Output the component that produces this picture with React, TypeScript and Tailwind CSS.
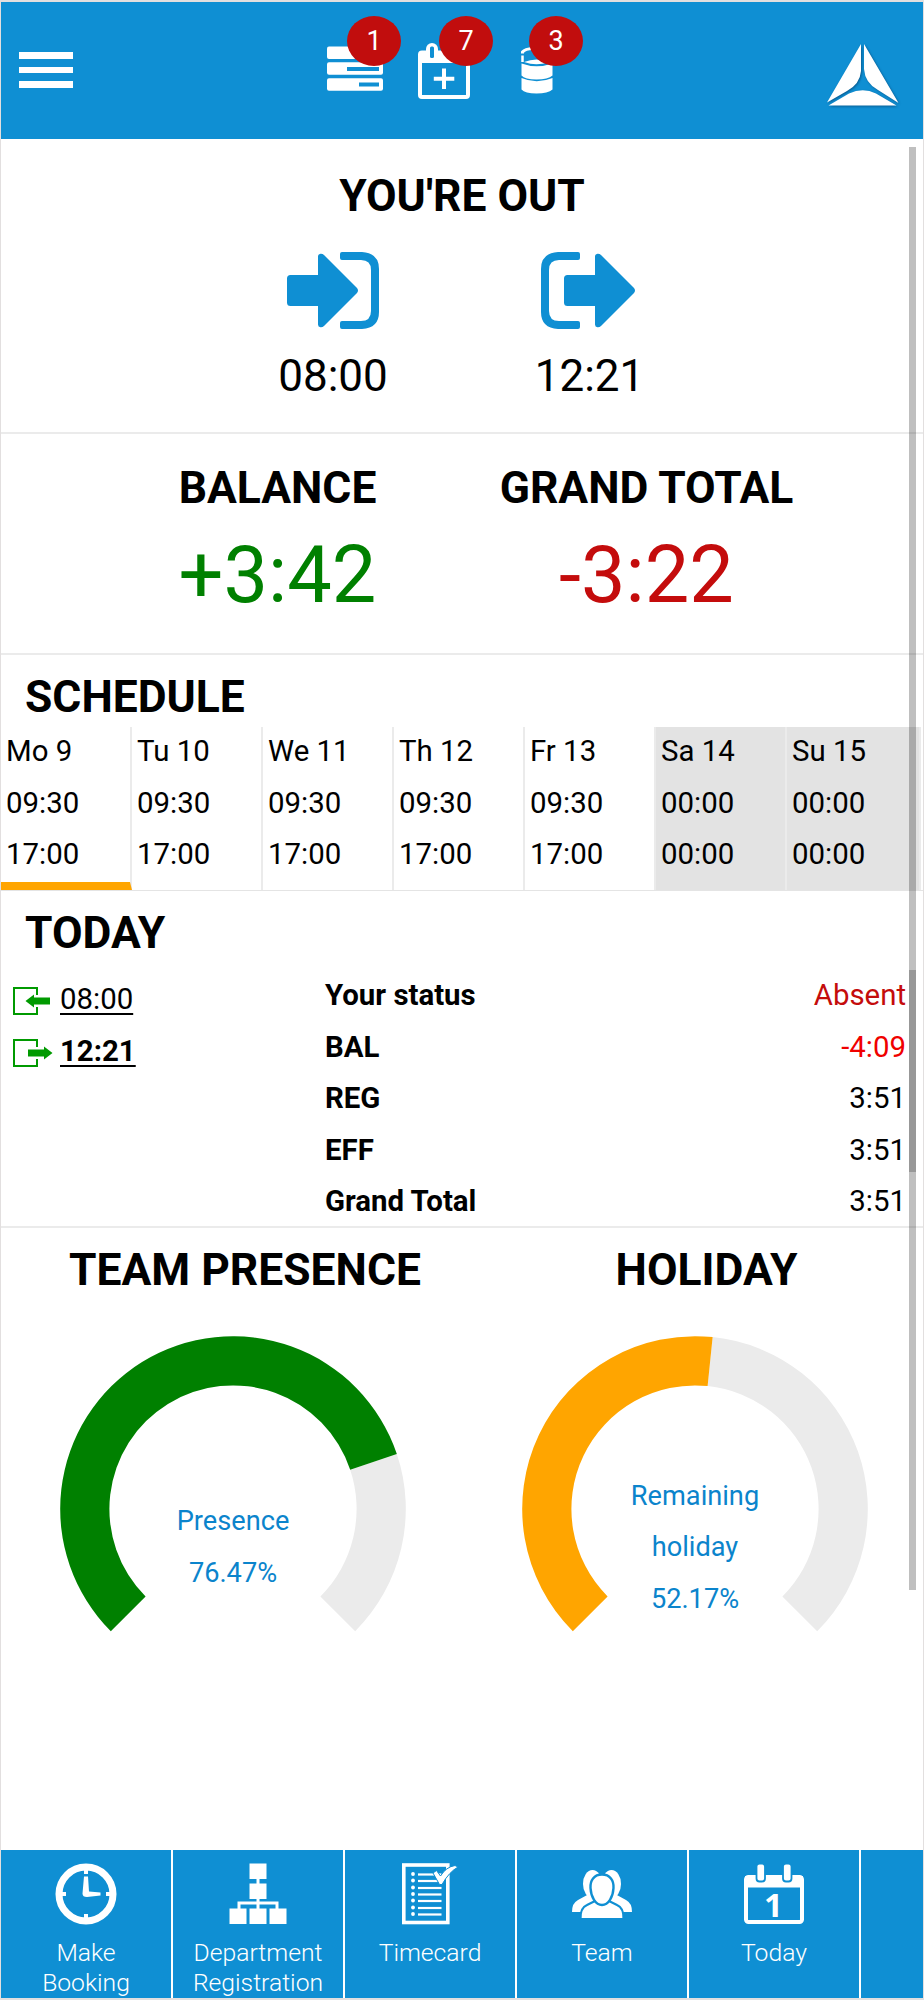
import type { ReactNode } from 'react';

interface Day {
  label: string;
  start: string;
  end: string;
  weekend?: boolean;
  current?: boolean;
}

const days: Day[] = [
  { label: 'Mo 9', start: '09:30', end: '17:00', current: true },
  { label: 'Tu 10', start: '09:30', end: '17:00' },
  { label: 'We 11', start: '09:30', end: '17:00' },
  { label: 'Th 12', start: '09:30', end: '17:00' },
  { label: 'Fr 13', start: '09:30', end: '17:00' },
  { label: 'Sa 14', start: '00:00', end: '00:00', weekend: true },
  { label: 'Su 15', start: '00:00', end: '00:00', weekend: true },
];

const totals = [
  { label: 'Your status', value: 'Absent', color: 'text-[#c40c0c]' },
  { label: 'BAL', value: '-4:09', color: 'text-[#f00000]' },
  { label: 'REG', value: '3:51', color: 'text-black' },
  { label: 'EFF', value: '3:51', color: 'text-black' },
  { label: 'Grand Total', value: '3:51', color: 'text-black' },
];

function ServerIcon() {
  return (
    <svg width="56" height="45" viewBox="0 0 56 45" fill="none">
      <rect x="0" y="0.5" width="56" height="12.5" rx="2" fill="#fff" />
      <rect x="0" y="16.3" width="56" height="12.5" rx="2" fill="#fff" />
      <rect x="0" y="32.2" width="56" height="12.5" rx="2" fill="#fff" />
      <rect x="20" y="21" width="32" height="4" fill="#0f8fd3" />
      <rect x="32" y="36.5" width="20" height="4" fill="#0f8fd3" />
    </svg>
  );
}

function CalendarPlusIcon() {
  return (
    <svg width="52" height="56" viewBox="0 0 52 56" fill="none">
      <rect x="2" y="9.5" width="48" height="44.5" rx="2" stroke="#fff" strokeWidth="4" />
      <rect x="2" y="9" width="48" height="11" fill="#fff" />
      <rect x="8" y="0" width="12" height="18" rx="6" fill="#fff" />
      <rect x="12" y="3.5" width="4" height="11.5" rx="1.5" fill="#0f8fd3" />
      <path d="M26 25.5v20.5M15.8 35.8h20.5" stroke="#fff" strokeWidth="4" />
    </svg>
  );
}

function DatabaseIcon() {
  return (
    <svg width="32" height="47" viewBox="0 0 32 47" fill="none">
      <path d="M1.500 15V8.500" stroke="#fff" strokeWidth="2.500" />
      <path d="M1.500 6.500V5Q4 1.800 12 1.500H20" stroke="#fff" strokeWidth="3" />
      <path d="M3 15Q15.500 10 28 15Q15.500 19.500 3 15Z" fill="#fff" />
      <path d="M0.500 16.500Q15.500 22 31.500 16.500V28.500Q27 32.500 15.500 32.500T0.500 28.500Z" fill="#fff" />
      <path d="M0.500 31Q15.500 37.500 31.500 31V42.500Q27 46.500 15.500 46.500T0.500 42.500Z" fill="#fff" />
    </svg>
  );
}

function Logo() {
  return (
    <svg className="drop-shadow-[1.500px_1.500px_1px_rgba(0,40,80,0.5)]" width="72" height="63" viewBox="0 0 72 63" fill="#fff">
      <path d="M34 0V27Q33 40 20 47L0 58.500Z" />
      <path d="M37 0V25Q38 39 51 46L71.500 59Z" />
      <path d="M1.500 61.500L22 49.500Q36 43 49 49.500L69.500 61.500Z" />
    </svg>
  );
}

function Arrow() {
  return <path d="M3.500 23H31V4.500Q31 2 33.500 1.700Q35.500 1.500 37 3L70 36Q72 38.500 70 41L37 74Q35.500 75.500 33.500 75.300Q31 75 31 72.500V54H3.500Q0 54 0 50.500V26.500Q0 23 3.500 23Z" />;
}

function SignInIcon() {
  return (
    <svg width="92" height="77" viewBox="0 0 92 77" fill="#0f8fd3">
      <Arrow />
      <path d="M55 0H75Q92 1 92 17V60Q92 76 75 77H55Q53 77 53 75V71Q53 69 55 69H74Q84 69 84 59V18Q84 8 74 8H55Q53 8 53 6V2Q53 0 55 0Z" />
    </svg>
  );
}

function SignOutIcon() {
  return (
    <svg width="94" height="77" viewBox="0 0 94 77" fill="#0f8fd3">
      <g transform="translate(23 0)">
        <Arrow />
      </g>
      <path d="M37 0H17Q0 1 0 17V60Q0 76 17 77H37Q39 77 39 75V71Q39 69 37 69H18Q8 69 8 59V18Q8 8 18 8H37Q39 8 39 6V2Q39 0 37 0Z" />
    </svg>
  );
}

function BookingIcon({ out }: { out?: boolean }) {
  return (
    <svg className="mt-[3px]" width="40" height="28" viewBox="0 0 40 28" fill="none">
      <path d="M24 8V1H1V27H24V20" stroke="#009a00" strokeWidth="2" />
      {out ? (
        <path d="M15 10.500H31V7.500L39.500 14L31 20.500V17.500H15Z" fill="#009a00" />
      ) : (
        <path d="M37 10.500H21V7.500L12.500 14L21 20.500V17.500H37Z" fill="#009a00" />
      )}
    </svg>
  );
}

function ClockIcon() {
  return (
    <svg width="62" height="62" viewBox="0 0 62 62" fill="none" stroke="#fff">
      <circle cx="31" cy="31" r="27" strokeWidth="7" />
      <path d="M31 6v5M31 51v5M6 31h5M51 31h5" strokeWidth="4" />
      <path d="M29 13.500h4L34 28.500L45.500 29.500V32.500L32 34Q27.500 34 27.500 30.500Z" fill="#fff" stroke="none" />
    </svg>
  );
}

function OrgIcon() {
  return (
    <svg width="58" height="62" viewBox="0 0 58 62" fill="#fff">
      <rect x="20.500" y="0.500" width="17" height="15.500" />
      <rect x="20.500" y="20.500" width="17" height="15.500" />
      <rect x="0.500" y="45.500" width="17" height="15.500" />
      <rect x="20.500" y="45.500" width="17" height="15.500" />
      <rect x="40.500" y="45.500" width="17" height="15.500" />
      <path d="M29 15V46M10 46V40H48V46" fill="none" stroke="#fff" strokeWidth="3" />
    </svg>
  );
}

function TimecardIcon() {
  const rows = [11, 17.5, 24.5, 31, 37.5, 44.5, 51];
  return (
    <svg width="56" height="62" viewBox="0 0 56 62" fill="none">
      <rect x="1.800" y="2" width="44" height="57.500" stroke="#fff" strokeWidth="3.600" />
      {rows.map((y) => (
        <g key={y}>
          <circle cx="11" cy={y} r="1.900" fill="#fff" />
          <path d={`M16 ${y + 0.5}H39.500`} stroke="#fff" strokeWidth="2.200" />
        </g>
      ))}
      <path d="M31 10L34.500 7.500L38.500 13Q44 4 53 2.500L56 4Q47 9 40 21.500H37.500Z" fill="#fff" stroke="#0f8fd3" strokeWidth="1" />
    </svg>
  );
}

function TeamIcon() {
  return (
    <svg width="60" height="62" viewBox="0 0 60 62" fill="#fff">
      <ellipse cx="20.500" cy="21" rx="9.500" ry="14" />
      <ellipse cx="39.500" cy="21" rx="9.500" ry="14" />
      <path d="M0 49Q0 40 6 37L17 31L26 40L14 49Z" />
      <path d="M60 49Q60 40 54 37L43 31L34 40L46 49Z" />
      <path d="M8.500 56Q8 45 15 42L24 37.500Q30 42 36 37.500L45 42Q52 45 51.500 56Z" stroke="#0f8fd3" strokeWidth="2.200" />
      <path d="M30 11.500C38 11.500 42 17.500 41.500 25C41 34 36.500 42 30 42S19 34 18.500 25C18 17.500 22 11.500 30 11.500Z" stroke="#0f8fd3" strokeWidth="2.400" />
    </svg>
  );
}

function TodayIcon() {
  return (
    <svg width="60" height="62" viewBox="0 0 60 62" fill="none">
      <rect x="2" y="14" width="56" height="45" rx="2.500" stroke="#fff" strokeWidth="4" />
      <rect x="1" y="13" width="58" height="11.500" fill="#fff" />
      <rect x="12.500" y="0.500" width="8.500" height="18" rx="3" fill="#fff" stroke="#0f8fd3" strokeWidth="1.800" />
      <rect x="39" y="0.500" width="8.500" height="18" rx="3" fill="#fff" stroke="#0f8fd3" strokeWidth="1.800" />
      <text x="29.500" y="53.500" textAnchor="middle" fontFamily="Open Sans, sans-serif" fontWeight="700" fontSize="33" fill="#fff">
        1
      </text>
    </svg>
  );
}

// Point on a 270° gauge that opens at the bottom
function gaugePoint(radius: number, fraction: number) {
  const angle = ((135 + 270 * fraction) * Math.PI) / 180;
  return `${173 + radius * Math.cos(angle)} ${173 + radius * Math.sin(angle)}`;
}

function gaugeArc(from: number, to: number) {
  const large = (to - from) * 270 > 180 ? 1 : 0;
  return `M${gaugePoint(172.8, from)}A172.8 172.8 0 ${large} 1 ${gaugePoint(172.8, to)}L${gaugePoint(123.6, to)}A123.6 123.6 0 ${large} 0 ${gaugePoint(123.6, from)}Z`;
}

function Gauge({ value, color, lines }: { value: number; color: string; lines: string[] }) {
  return (
    <div className="relative w-[346px] h-[346px] mt-[41px]">
      <svg width="346" height="346" viewBox="0 0 346 346">
        <path d={gaugeArc(value, 1)} fill="#ebebeb" />
        <path d={gaugeArc(0, value)} fill={color} />
      </svg>
      <div className="absolute inset-0 pt-[78px] flex flex-col items-center justify-center text-center text-[27.200px] leading-[51.600px] text-[#0b84cc]">
        {lines.map((line) => (
          <span key={line}>{line}</span>
        ))}
      </div>
    </div>
  );
}

function BadgeIcon({ count, className, children }: { count: number; className: string; children: ReactNode }) {
  return (
    <div className="relative">
      {children}
      <span className={`absolute flex items-center justify-center w-[54px] h-[50px] rounded-[50%] bg-[#c10d0d] text-white text-[27px] ${className}`}>
        {count}
      </span>
    </div>
  );
}

function Heading({ children }: { children: ReactNode }) {
  return <h2 className="text-[44.400px] leading-[50px] font-bold whitespace-nowrap">{children}</h2>;
}

function NavItem({ icon, label }: { icon: ReactNode; label: string }) {
  return (
    <button className="shrink-0 w-[170px] bg-[#0f8fd3] flex flex-col items-center pt-[13px] text-white">
      {icon}
      <span className="mt-[13px] w-[140px] text-center text-[24.700px] leading-[29.500px] font-light">{label}</span>
    </button>
  );
}

export default function App() {
  return (
    <div className="relative w-[924px] h-[2000px] flex flex-col bg-white border-x border-t-2 border-b-2 border-[#e2dfdf] text-black font-[Roboto,sans-serif] overflow-hidden">
      <header className="relative shrink-0 h-[137px] bg-[#0f8fd3] flex items-start pl-[18px] pr-[24px]">
        <button className="mt-[50px] w-[54px] flex flex-col gap-[8px]">
          <span className="h-[6.700px] bg-white" />
          <span className="h-[6.700px] bg-white" />
          <span className="h-[6.700px] bg-white" />
        </button>
        <div className="ml-[254px] mt-[41px] flex items-start">
          <div className="mt-[3px]">
            <BadgeIcon count={1} className="left-[20px] -top-[30px]">
              <ServerIcon />
            </BadgeIcon>
          </div>
          <div className="ml-[35px]">
            <BadgeIcon count={7} className="left-[21px] -top-[27px]">
              <CalendarPlusIcon />
            </BadgeIcon>
          </div>
          <div className="ml-[51px] mt-[4px]">
            <BadgeIcon count={3} className="left-[8px] -top-[31px]">
              <DatabaseIcon />
            </BadgeIcon>
          </div>
        </div>
        <div className="ml-auto mt-[42px]">
          <Logo />
        </div>
      </header>

      <section className="shrink-0 h-[295px] pt-[32px] border-b-2 border-[#ebebeb] flex flex-col items-center">
        <Heading>YOU'RE OUT</Heading>
        <div className="mt-[31px] w-[514px] pr-[2px] grid grid-cols-2">
          <div className="flex flex-col items-center">
            <SignInIcon />
            <span className="mt-[22px] text-[44px] leading-[50px]">08:00</span>
          </div>
          <div className="flex flex-col items-center">
            <div className="mr-[2px]">
              <SignOutIcon />
            </div>
            <span className="mt-[22px] ml-px text-[44px] leading-[50px]">12:21</span>
          </div>
        </div>
      </section>

      <section className="shrink-0 h-[221px] pt-[29px] pl-[92px] pr-[92px] border-b-2 border-[#ebebeb] grid grid-cols-2 justify-items-center content-start">
        <div className="flex flex-col items-center">
          <Heading>BALANCE</Heading>
          <span className="mt-[22px] text-[79.300px] leading-[80px] text-[#008000]">+3:42</span>
        </div>
        <div className="flex flex-col items-center">
          <Heading>GRAND TOTAL</Heading>
          <span className="mt-[22px] text-[79.300px] leading-[80px] text-[#c40c0c]">-3:22</span>
        </div>
      </section>

      <section className="shrink-0 h-[236px] pt-[17px] border-b border-[#e4e4e4]">
        <div className="pl-[24px]">
          <Heading>SCHEDULE</Heading>
        </div>
        <div className="mt-[5px] w-[920px] h-[163px] grid grid-cols-[repeat(6,131px)_1fr]">
          {days.map((day) => (
            <div
              key={day.label}
              className={`flex flex-col pl-[5px] text-[29.400px] leading-[51.600px] border-r-2 border-[#ebebeb] ${day.weekend ? 'bg-[#e3e3e3]' : ''} ${day.current ? 'border-b-8 border-b-[#ffa500]' : ''}`}
            >
              <span className="-mt-px">{day.label}</span>
              <span>{day.start}</span>
              <span>{day.end}</span>
            </div>
          ))}
        </div>
      </section>

      <section className="shrink-0 h-[337px] pt-[17px] border-b-2 border-[#ebebeb]">
        <div className="pl-[24px]">
          <Heading>TODAY</Heading>
        </div>
        <div className="mt-[12px] flex text-[29.400px] leading-[51.600px]">
          <div className="w-[324px] pt-[4px] pl-[12px]">
            <div className="flex items-center">
              <BookingIcon />
              <a className="ml-[7px] underline decoration-2 underline-offset-4">08:00</a>
            </div>
            <div className="flex items-center">
              <BookingIcon out />
              <a className="ml-[7px] font-bold underline decoration-2 underline-offset-4">12:21</a>
            </div>
          </div>
          <div className="flex-1 pr-[17px]">
            {totals.map((row) => (
              <div key={row.label} className="flex justify-between">
                <span className="font-bold">{row.label}</span>
                <span className={row.color}>{row.value}</span>
              </div>
            ))}
          </div>
        </div>
      </section>

      <section className="grow pt-[17px] pl-px flex">
        <div className="w-[462px] shrink-0 flex flex-col items-center">
          <div className="pl-[24px]">
            <Heading>TEAM PRESENCE</Heading>
          </div>
          <Gauge value={0.7647} color="#008000" lines={['Presence', '76.47%']} />
        </div>
        <div className="w-[462px] shrink-0 flex flex-col items-center">
          <div className="pl-[23px]">
            <Heading>HOLIDAY</Heading>
          </div>
          <Gauge value={0.5217} color="#ffa500" lines={['Remaining', 'holiday', '52.17%']} />
        </div>
      </section>

      <nav className="shrink-0 h-[148px] flex gap-[2px] overflow-hidden">
        <NavItem icon={<ClockIcon />} label="Make Booking" />
        <NavItem icon={<OrgIcon />} label="Department Registration" />
        <NavItem icon={<TimecardIcon />} label="Timecard" />
        <NavItem icon={<TeamIcon />} label="Team" />
        <NavItem icon={<TodayIcon />} label="Today" />
        <div className="grow bg-[#0f8fd3]" />
      </nav>

      {/* scroll track and thumb over the content */}
      <div className="absolute right-[7px] top-[145px] w-[7px] h-[1443px] bg-black/25">
        <div className="mt-[823px] h-[202px] bg-black/20" />
      </div>
    </div>
  );
}
